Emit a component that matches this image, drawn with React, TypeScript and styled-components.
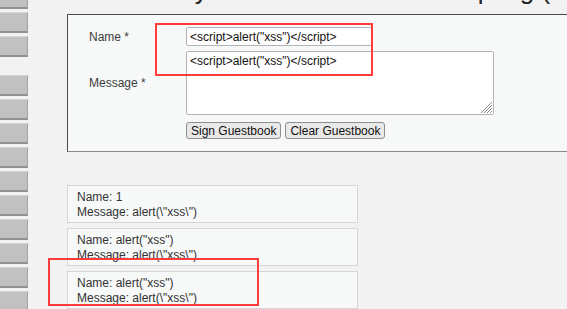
import { createGlobalStyle, styled } from "styled-components";

const GlobalStyle = createGlobalStyle`
  html, body {
    margin: 0;
    padding: 0;
    background: #f2f2f2;
  }
  body {
    font-family: "Liberation Sans", Arial, sans-serif;
    color: #333;
  }
`;

const Screen = styled.div`
  position: relative;
  height: 309px;
  overflow: hidden;
`;

const Page = styled.div`
  display: flex;
  align-items: flex-start;
  margin-top: -25px;
`;

const Menu = styled.nav`
  width: 28px;
  padding-top: 13px;
  display: flex;
  flex-direction: column;
  gap: 18px;
`;

const MenuGroup = styled.div`
  display: flex;
  flex-direction: column;
  gap: 3px;
`;

const MenuButton = styled.div`
  box-sizing: border-box;
  width: 28px;
  height: 21px;
  background: #c1c1c1;
  border-top: 1px solid #d6d6d6;
  border-right: 1px solid #a3a3a3;
  border-bottom: 2px solid #919191;
`;

const Main = styled.main`
  margin-left: 39px;
  flex: 1;
`;

const Title = styled.h1`
  margin: 0 0 9px;
  font-size: 26px;
  line-height: 30px;
  font-weight: normal;
  color: #222;
  white-space: nowrap;
`;

const FormBox = styled.form`
  box-sizing: border-box;
  width: 540px;
  padding: 12px 0 12px 21px;
  background: #f7f8f8;
  border: 1px solid #4a4a4a;
  border-bottom-color: #8a8a8a;
`;

const Row = styled.div<{ $gap?: number }>`
  display: grid;
  grid-template-columns: 97px auto;
  align-items: center;
  margin-bottom: ${(p) => p.$gap ?? 0}px;
`;

const Label = styled.label`
  font-size: 12px;
  color: #3c3c3c;
`;

const TextInput = styled.input`
  box-sizing: border-box;
  width: 186px;
  height: 19px;
  padding: 1px 3px;
  margin: 0;
  font: 12px "Liberation Sans", Arial, sans-serif;
  color: #111;
  background: #fff;
  border: 1px solid #b4b4b8;
  border-radius: 2px;
`;

const AreaWrap = styled.div`
  position: relative;
  width: 308px;
  height: 64px;
`;

const TextArea = styled.textarea`
  display: block;
  box-sizing: border-box;
  width: 308px;
  height: 64px;
  padding: 2px 3px;
  margin: 0;
  font: 12px "Liberation Sans", Arial, sans-serif;
  color: #111;
  background: #fff;
  border: 1px solid #b4b4b8;
  border-radius: 2px;
  resize: none;
`;

const Grip = styled.svg`
  position: absolute;
  right: 2px;
  bottom: 2px;
  pointer-events: none;
`;

const Buttons = styled.div`
  display: flex;
  gap: 4px;
`;

const Button = styled.button`
  box-sizing: border-box;
  height: 17px;
  padding: 0 4px;
  margin: 0;
  font: 12px "Liberation Sans", Arial, sans-serif;
  line-height: 14px;
  color: #111;
  background: #e9e9e9;
  border: 1px solid #8f8f8f;
  border-radius: 3px;
`;

const Comments = styled.div`
  margin-top: 33px;
  display: flex;
  flex-direction: column;
  gap: 5px;
`;

const Comment = styled.div`
  box-sizing: border-box;
  width: 291px;
  height: 38px;
  padding: 4px 9px 3px;
  background: #f7f8f8;
  border: 1px solid #d6d6d6;
  font-size: 12px;
  line-height: 14.5px;
  color: #333;
`;

const Highlight = styled.div<{ $x: number; $y: number; $w: number; $h: number }>`
  position: absolute;
  left: ${(p) => p.$x}px;
  top: ${(p) => p.$y}px;
  width: ${(p) => p.$w}px;
  height: ${(p) => p.$h}px;
  box-sizing: border-box;
  border: 2px solid #ff3b3b;
  pointer-events: none;
`;

const payload = '<script>alert("xss")</script>';

const comments = [
  { name: "1", message: 'alert(\\"xss\\")' },
  { name: 'alert("xss")', message: 'alert(\\"xss\\")' },
  { name: 'alert("xss")', message: 'alert(\\"xss\\")' },
];

const App = () => {
  return (
    <Screen>
      <GlobalStyle />
      <Page>
        <Menu>
          <MenuGroup>
            {[0, 1, 2].map((i) => (
              <MenuButton key={i} />
            ))}
          </MenuGroup>
          <MenuGroup>
            {Array.from({ length: 10 }).map((_, i) => (
              <MenuButton key={i} />
            ))}
          </MenuGroup>
        </Menu>

        <Main>
          <Title>Vulnerability: Stored Cross Site Scripting (XSS)</Title>

          <FormBox onSubmit={(e) => e.preventDefault()}>
            <Row $gap={5}>
              <Label>Name *</Label>
              <TextInput defaultValue={payload} />
            </Row>
            <Row $gap={7}>
              <Label>Message *</Label>
              <AreaWrap>
                <TextArea defaultValue={payload} />
                {/* resize grip */}
                <Grip width="12" height="12" viewBox="0 0 12 12">
                  <g stroke="#8a8a8a" strokeWidth="1">
                    <path d="M12 1 L1 12" />
                    <path d="M12 4 L4 12" />
                    <path d="M12 7 L7 12" />
                    <path d="M12 10 L10 12" />
                  </g>
                </Grip>
              </AreaWrap>
            </Row>
            <Row>
              <span />
              <Buttons>
                <Button type="button">Sign Guestbook</Button>
                <Button type="button">Clear Guestbook</Button>
              </Buttons>
            </Row>
          </FormBox>

          <Comments>
            {comments.map((c, index) => (
              <Comment key={index}>
                Name: {c.name}
                <br />
                Message: {c.message}
              </Comment>
            ))}
          </Comments>
        </Main>
      </Page>

      <Highlight $x={155} $y={23} $w={218} $h={53} />
      <Highlight $x={48} $y={258} $w={211} $h={48} />
    </Screen>
  );
};

export default App;
